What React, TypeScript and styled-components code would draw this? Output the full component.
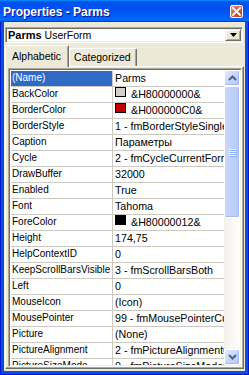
import React from 'react';
import styled, {createGlobalStyle} from 'styled-components';

type PropRow = {
    name: string
    value: string
    swatch?: string
}

const rows: PropRow[] = [
    {name: '(Name)', value: 'Parms'},
    {name: 'BackColor', value: '&H80000000&', swatch: '#D4D0C8'},
    {name: 'BorderColor', value: '&H000000C0&', swatch: '#C00000'},
    {name: 'BorderStyle', value: '1 - fmBorderStyleSingle'},
    {name: 'Caption', value: 'Параметры'},
    {name: 'Cycle', value: '2 - fmCycleCurrentForm'},
    {name: 'DrawBuffer', value: '32000'},
    {name: 'Enabled', value: 'True'},
    {name: 'Font', value: 'Tahoma'},
    {name: 'ForeColor', value: '&H80000012&', swatch: '#000000'},
    {name: 'Height', value: '174,75'},
    {name: 'HelpContextID', value: '0'},
    {name: 'KeepScrollBarsVisible', value: '3 - fmScrollBarsBoth'},
    {name: 'Left', value: '0'},
    {name: 'MouseIcon', value: '(Icon)'},
    {name: 'MousePointer', value: '99 - fmMousePointerCustom'},
    {name: 'Picture', value: '(None)'},
    {name: 'PictureAlignment', value: '2 - fmPictureAlignmentCenter'},
    {name: 'PictureSizeMode', value: '0 - fmPictureSizeModeClip'},
]

// the form has more properties than fit, thumb shows the visible part
const TOTAL_PROPS = 37
const VISIBLE_PROPS = 18.5
const TRACK = 264

const GlobalStyle = createGlobalStyle`
  html, body {
    margin: 0;
    padding: 0;
    background: #ffffff;
  }
  body {
    font-family: "Liberation Sans", Arial, sans-serif;
  }
`

export default function App() {
    const thumbHeight = Math.round(TRACK * VISIBLE_PROPS / TOTAL_PROPS)

    return (
        <Window>
            <GlobalStyle/>
            <TitleBar>
                <Title>Properties - Parms</Title>
                <CloseButton>
                    <svg width="9" height="9" viewBox="0 0 9 9">
                        <path d="M1 1 L8 8 M8 1 L1 8" stroke="#ffffff" strokeWidth="1.8" strokeLinecap="square"/>
                    </svg>
                </CloseButton>
            </TitleBar>
            <Client>
                <Combo>
                    <ComboText><b>Parms</b> UserForm</ComboText>
                    <DropButton>
                        <svg width="7" height="4" viewBox="0 0 7 4">
                            <path d="M0 0 H7 L3.5 4 Z" fill="#000000"/>
                        </svg>
                    </DropButton>
                </Combo>
                <TabRow>
                    <Tab $active>Alphabetic</Tab>
                    <Tab>Categorized</Tab>
                </TabRow>
                <Panel>
                    <Grid>
                        <RowList>
                            {rows.map((r, i) => (
                                <Row key={r.name}>
                                    <NameCell $selected={i === 0}>{r.name}</NameCell>
                                    <ValueCell>
                                        {r.swatch && <Swatch color={r.swatch}/>}
                                        {r.value}
                                    </ValueCell>
                                </Row>
                            ))}
                        </RowList>
                        <ScrollBar>
                            <ScrollButton>
                                <svg width="9" height="6" viewBox="0 0 9 6">
                                    <path d="M1 5 L4.5 1.5 L8 5" stroke="#4D6185" strokeWidth="2" fill="none"/>
                                </svg>
                            </ScrollButton>
                            <Track>
                                <Thumb style={{height: thumbHeight}}>
                                    <Grip/>
                                    <Grip/>
                                    <Grip/>
                                    <Grip/>
                                </Thumb>
                            </Track>
                            <ScrollButton>
                                <svg width="9" height="6" viewBox="0 0 9 6">
                                    <path d="M1 1 L4.5 4.5 L8 1" stroke="#4D6185" strokeWidth="2" fill="none"/>
                                </svg>
                            </ScrollButton>
                        </ScrollBar>
                    </Grid>
                </Panel>
            </Client>
        </Window>
    );
};

const Window = styled.div`
  width: 249px;
  height: 375px;
  box-sizing: border-box;
  display: flex;
  flex-direction: column;
  background: #0a4ee0;
  box-shadow: inset 1px 0 #0019cf, inset -1px 0 #0019cf, inset 0 -1px #0019cf;
  overflow: hidden;
`

const TitleBar = styled.div`
  height: 22px;
  flex: none;
  display: flex;
  align-items: center;
  justify-content: space-between;
  padding: 1px 6px 0 3px;
  box-sizing: border-box;
  background: linear-gradient(180deg, #0997ff, #0053ee 8%, #0050ee 40%, #0066ff 88%, #0066ff 93%, #005bff 95%, #003dd7 96%, #003dd7);
`

const Title = styled.div`
  font-family: "Liberation Sans", Arial, sans-serif;
  font-weight: bold;
  font-size: 12px;
  color: #ffffff;
  text-shadow: 1px 1px #0f1089;
`

const CloseButton = styled.div`
  width: 13px;
  height: 13px;
  box-sizing: border-box;
  border: 1px solid #ffffff;
  border-radius: 2px;
  background: radial-gradient(circle at 85% 85%, #c23a1d 0, #e0583a 55%, #e77a61 80%, #f3b6a6 100%);
  display: flex;
  align-items: center;
  justify-content: center;
`

const Client = styled.div`
  flex: 1;
  margin: 0 4px 4px 4px;
  padding: 5px 1px 2px 1px;
  background: #ece9d8;
  display: flex;
  flex-direction: column;
  min-height: 0;
`

const Combo = styled.div`
  height: 16px;
  flex: none;
  box-sizing: border-box;
  display: flex;
  align-items: stretch;
  margin-right: 1px;
  background: #ffffff;
  border-style: solid;
  border-width: 1px;
  border-color: #aca899 #ffffff #ffffff #aca899;
  box-shadow: inset 1px 1px #716f64, inset -1px -1px #f1efe2;
`

const ComboText = styled.div`
  flex: 1;
  padding: 0 0 0 2px;
  font-size: 10.5px;
  line-height: 14px;
  color: #000000;
  white-space: nowrap;
  overflow: hidden;

  b {
    font-size: 11px;
  }
`

const DropButton = styled.div`
  width: 16px;
  margin: 1px 1px 1px 0;
  box-sizing: border-box;
  background: #ece9d8;
  border-style: solid;
  border-width: 1px;
  border-color: #f1efe2 #716f64 #716f64 #f1efe2;
  box-shadow: inset 1px 1px #ffffff, inset -1px -1px #aca899;
  display: flex;
  align-items: center;
  justify-content: center;
`

const TabRow = styled.div`
  height: 21px;
  flex: none;
  margin-top: 2px;
  display: flex;
  align-items: flex-end;
`

const Tab = styled.div<{ $active?: boolean }>`
  position: relative;
  z-index: ${props => props.$active ? 1 : 0};
  height: ${props => props.$active ? '22px' : '18px'};
  margin-bottom: ${props => props.$active ? '-1px' : '0'};
  padding: ${props => props.$active ? '4px 7px 0 6px' : '2px 5px 0 4px'};
  box-sizing: border-box;
  background: #ece9d8;
  border-top: 1px solid #ffffff;
  border-left: 1px solid #ffffff;
  border-right: 1px solid #716f64;
  border-radius: 2px 2px 0 0;
  box-shadow: inset -1px 0 #aca899;
  font-size: 10.5px;
  line-height: 13px;
  color: #000000;
  white-space: nowrap;
`

const Panel = styled.div`
  flex: 1;
  min-height: 0;
  display: flex;
  padding: 1px 1px 1px 2px;
  border-style: solid;
  border-width: 1px;
  border-color: #ffffff #716f64 #716f64 #ffffff;
  box-shadow: inset -1px -1px #aca899;
`

const Grid = styled.div`
  flex: 1;
  min-width: 0;
  display: flex;
  border-style: solid;
  border-width: 1px;
  border-color: #aca899 #ffffff #ffffff #aca899;
  box-shadow: inset 1px 1px #716f64, inset -1px -1px #f1efe2;
  padding: 1px 1px 1px 1px;
  background: #ffffff;
`

const RowList = styled.div`
  flex: 1;
  min-width: 0;
  overflow: hidden;
  padding: 1px 0 0 1px;
`

const Row = styled.div`
  display: grid;
  grid-template-columns: 102px 1fr;
  height: 16px;
  box-sizing: border-box;
  border-bottom: 1px solid #cbc9c0;
  line-height: 14px;
  color: #000000;
`

const NameCell = styled.div<{ $selected?: boolean }>`
  padding-left: 1px;
  font-size: 10px;
  border-right: 1px solid #cbc9c0;
  background: ${props => props.$selected ? '#316ac5' : 'transparent'};
  color: ${props => props.$selected ? '#ffffff' : '#000000'};
  white-space: nowrap;
  overflow: hidden;
`

const ValueCell = styled.div`
  padding-left: 2px;
  font-size: 10.7px;
  display: flex;
  align-items: flex-start;
  white-space: nowrap;
  overflow: hidden;
`

const Swatch = styled.span`
  flex: none;
  width: 11px;
  height: 10px;
  margin: 0 5px 0 0;
  box-sizing: border-box;
  border: 1px solid #000000;
  background: ${props => props.color};
`

const ScrollBar = styled.div`
  width: 16px;
  flex: none;
  display: flex;
  flex-direction: column;
  background: linear-gradient(90deg, #f3f1ec, #fefefb);
`

const ScrollButton = styled.div`
  height: 16px;
  flex: none;
  box-sizing: border-box;
  border: 1px solid #ffffff;
  border-radius: 2px;
  background: linear-gradient(135deg, #e0e9fe, #c2d3fc 60%, #b4c8f6);
  box-shadow: inset -1px -1px #a4b9f0;
  display: flex;
  align-items: center;
  justify-content: center;
`

const Track = styled.div`
  flex: 1;
  min-height: 0;
`

const Thumb = styled.div`
  box-sizing: border-box;
  border: 1px solid #ffffff;
  border-radius: 2px;
  background: linear-gradient(90deg, #c9d7fc, #bfd0fb 50%, #b6c9f7);
  box-shadow: inset -1px -1px #a7bdf2;
  display: flex;
  flex-direction: column;
  align-items: center;
  justify-content: center;
  gap: 1px;
`

const Grip = styled.div`
  width: 7px;
  height: 1px;
  background: #eef4fe;
  box-shadow: 1px 1px #8cb0f8;
`
